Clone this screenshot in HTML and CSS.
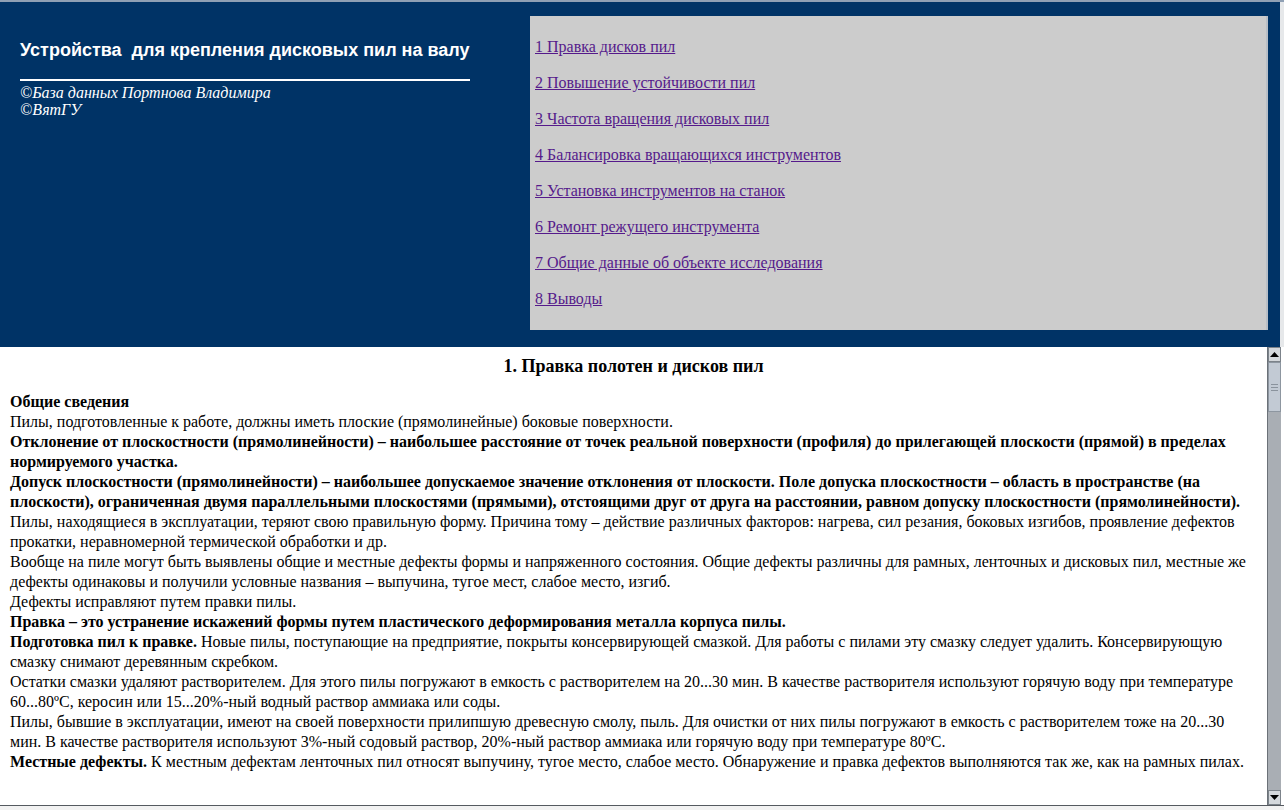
FILE: index.html
```html
<!DOCTYPE html>
<html lang="ru">
<head>
<meta charset="utf-8">
<title>Устройства для крепления дисковых пил на валу</title>
<link rel="stylesheet" href="styles.css">
</head>
<body>
<div class="page">
  <header class="top">
    <div class="brand">
      <h1 class="brand-title">Устройства&nbsp; для крепления дисковых пил на валу</h1>
      <div class="brand-rule"></div>
      <p class="brand-copy">©База данных Портнова Владимира<br>©ВятГУ</p>
    </div>
    <nav class="menu">
      <a href="#">1 Правка дисков пил</a>
      <a href="#">2 Повышение устойчивости пил</a>
      <a href="#">3 Частота вращения дисковых пил</a>
      <a href="#">4 Балансировка вращающихся инструментов</a>
      <a href="#">5 Установка инструментов на станок</a>
      <a href="#">6 Ремонт режущего инструмента</a>
      <a href="#">7 Общие данные об объекте исследования</a>
      <a href="#">8 Выводы</a>
    </nav>
    <div class="top-edge"></div>
  </header>
  <main class="frame">
    <article class="content">
      <h2 class="title">1. Правка полотен и дисков пил</h2>
      <p class="b">Общие сведения</p>
      <p>Пилы, подготовленные к работе, должны иметь плоские (прямолинейные) боковые поверхности.</p>
      <p class="b">Отклонение от плоскостности (прямолинейности) – наибольшее расстояние от точек реальной поверхности (профиля) до прилегающей плоскости (прямой) в пределах нормируемого участка.</p>
      <p class="b">Допуск плоскостности (прямолинейности) – наибольшее допускаемое значение отклонения от плоскости. Поле допуска плоскостности – область в пространстве (на плоскости), ограниченная двумя параллельными плоскостями (прямыми), отстоящими друг от друга на расстоянии, равном допуску плоскостности (прямолинейности).</p>
      <p>Пилы, находящиеся в эксплуатации, теряют свою правильную форму. Причина тому – действие различных факторов: нагрева, сил резания, боковых изгибов, проявление дефектов прокатки, неравномерной термической обработки и др.</p>
      <p>Вообще на пиле могут быть выявлены общие и местные дефекты формы и напряженного состояния. Общие дефекты различны для рамных, ленточных и дисковых пил, местные же дефекты одинаковы и получили условные названия – выпучина, тугое мест, слабое место, изгиб.</p>
      <p>Дефекты исправляют путем правки пилы.</p>
      <p class="b">Правка – это устранение искажений формы путем пластического деформирования металла корпуса пилы.</p>
      <p><b>Подготовка пил к правке.</b> Новые пилы, поступающие на предприятие, покрыты консервирующей смазкой. Для работы с пилами эту смазку следует удалить. Консервирующую смазку снимают деревянным скребком.</p>
      <p>Остатки смазки удаляют растворителем. Для этого пилы погружают в емкость с растворителем на 20...30 мин. В качестве растворителя используют горячую воду при температуре 60...80ºC, керосин или 15...20%-ный водный раствор аммиака или соды.</p>
      <p>Пилы, бывшие в эксплуатации, имеют на своей поверхности прилипшую древесную смолу, пыль. Для очистки от них пилы погружают в емкость с растворителем тоже на 20...30 мин. В качестве растворителя используют 3%-ный содовый раствор, 20%-ный раствор аммиака или горячую воду при температуре 80ºC.</p>
      <p><b>Местные дефекты.</b> К местным дефектам ленточных пил относят выпучину, тугое место, слабое место. Обнаружение и правка дефектов выполняются так же, как на рамных пилах.</p>
    </article>
    <div class="scrollbar">
      <div class="sb-btn"><svg width="9" height="5" viewBox="0 0 9 5"><polygon points="0,5 9,5 4.5,0" fill="#000"/></svg></div>
      <div class="sb-thumb"><span></span><span></span><span></span></div>
      <div class="sb-track"></div>
      <div class="sb-btn"><svg width="9" height="5" viewBox="0 0 9 5"><polygon points="0,0 9,0 4.5,5" fill="#000"/></svg></div>
    </div>
  </main>
  <div class="bottom-edge"></div>
</div>
</body>
</html>
```

FILE: styles.css
```css
html, body {
  margin: 0;
  padding: 0;
  background: #ffffff;
}

.page {
  width: 1284px;
  height: 810px;
  overflow: hidden;
  display: flex;
  flex-direction: column;
}

.top {
  height: 345px;
  border-top: 2px solid #8fa0b4;
  background: #003366;
  display: flex;
  flex-shrink: 0;
}

.brand {
  width: 510px;
  padding: 0 0 0 20px;
  flex-shrink: 0;
  color: #ffffff;
}

.brand-title {
  margin: 37px 0 0 0;
  font-family: "Liberation Sans", Arial, sans-serif;
  font-size: 18px;
  font-weight: bold;
  line-height: 22px;
  white-space: nowrap;
}

.brand-rule {
  width: 450px;
  height: 2px;
  background: #ffffff;
  margin-top: 18px;
}

.brand-copy {
  margin: 3px 0 0 0;
  font-family: "Liberation Serif", "Times New Roman", serif;
  font-style: italic;
  font-size: 16px;
  line-height: 17px;
}

.menu {
  width: 731px;
  height: 272px;
  margin-top: 14px;
  flex-shrink: 0;
  background: #cccccc;
  border-right: 2px solid #b8bec6;
  padding: 21px 0 21px 5px;
  display: flex;
  flex-direction: column;
  align-items: flex-start;
  gap: 16px;
}

.menu a {
  font-family: "Liberation Serif", "Times New Roman", serif;
  font-size: 16px;
  line-height: 20px;
  color: #551a8b;
  text-decoration: underline;
}

.top-edge {
  flex: 1;
  border-right: 4px solid #e6e8ea;
}

.frame {
  flex: 1;
  display: flex;
  overflow: hidden;
  background: #ffffff;
}

.content {
  width: 1247px;
  flex-shrink: 0;
  padding: 8px 10px 0 10px;
  font-family: "Liberation Serif", "Times New Roman", serif;
  font-size: 16px;
  line-height: 20px;
  color: #000000;
}

.title {
  margin: 0 0 15px 0;
  text-align: center;
  font-size: 18px;
  line-height: 22px;
  font-weight: bold;
}

.content p {
  margin: 0;
}

.content p.b {
  font-weight: bold;
}

.scrollbar {
  width: 13px;
  display: flex;
  flex-direction: column;
  background: #a9aeb4;
  border-left: 1px solid #6b7178;
  flex-shrink: 0;
}

.sb-btn {
  height: 15px;
  background: #d4d8dc;
  border: 1px solid #7c838a;
  box-sizing: border-box;
  display: flex;
  align-items: center;
  justify-content: center;
}

.sb-thumb {
  height: 50px;
  background: #c2cad4;
  border: 1px solid #8d96a0;
  box-sizing: border-box;
  display: flex;
  flex-direction: column;
  align-items: center;
  justify-content: center;
  gap: 2px;
}

.sb-thumb span {
  width: 7px;
  height: 1px;
  background: #8a939d;
}

.sb-track {
  flex: 1;
}

.bottom-edge {
  height: 4px;
  border-top: 1px solid #555a60;
  background: #f2f2f2;
  flex-shrink: 0;
}
```
